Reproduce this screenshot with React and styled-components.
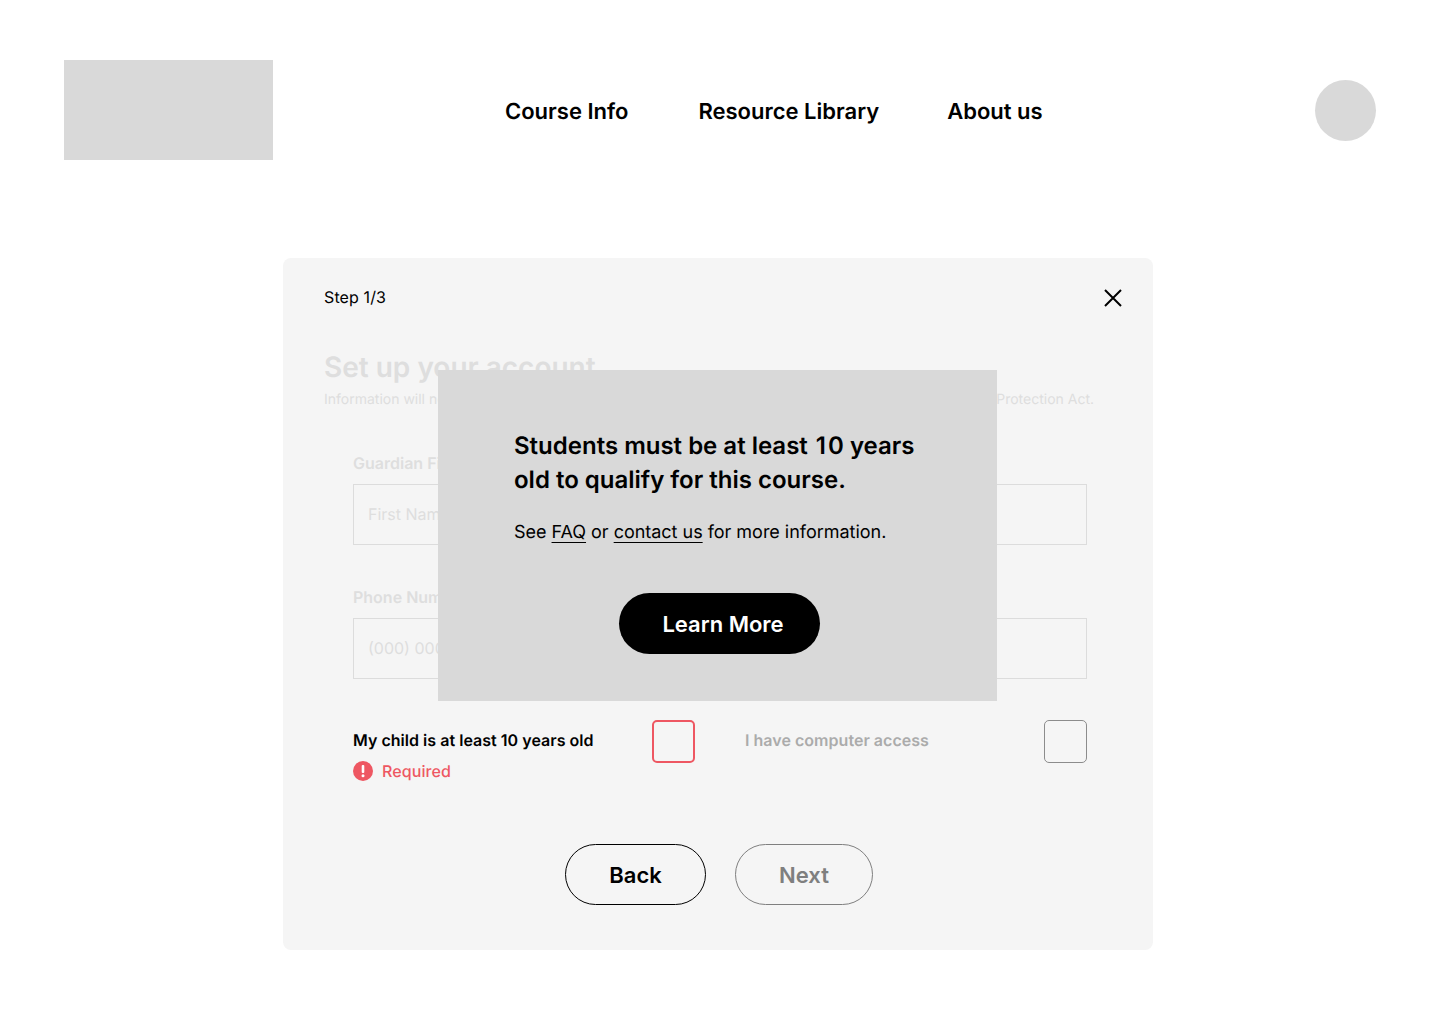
import React from 'react';
import styled, { createGlobalStyle } from 'styled-components';

const GlobalStyle = createGlobalStyle`
  html, body { margin: 0; padding: 0; background: #fff; }
  body {
    font-family: Inter, "Liberation Sans", sans-serif;
    color: #000;
    text-rendering: geometricPrecision;
  }
  * { box-sizing: border-box; }
`;

const Page = styled.div`
  width: 1440px;
  height: 1024px;
  overflow: hidden;
`;

const Header = styled.header`
  display: flex;
  align-items: flex-start;
  height: 198px;
  padding: 60px 64px 0;
`;

const Logo = styled.div`
  width: 209px;
  height: 100px;
  background: #d9d9d9;
`;

const Nav = styled.nav`
  display: flex;
  gap: 70px;
  margin-left: 232px;
  margin-top: 39px;
  font-size: 22px;
  line-height: 27px;
  font-weight: 600;
`;

const NavLink = styled.a`
  color: #000;

  &:last-child {
    margin-left: -2px;
  }
`;

const Avatar = styled.div`
  width: 61px;
  height: 61px;
  margin: 20px 0 0 auto;
  border-radius: 50%;
  background: #d9d9d9;
`;

const Card = styled.section`
  position: relative;
  width: 870px;
  height: 692px;
  margin: 60px 0 0 283px;
  padding: 29px 41px 0;
  background: #f5f5f5;
  border-radius: 8px;
`;

const TopRow = styled.div`
  display: flex;
  justify-content: space-between;
  align-items: flex-start;
`;

const Step = styled.span`
  font-size: 16px;
  line-height: 20px;
  letter-spacing: 0.12px;
`;

const Close = styled.svg`
  display: block;
  width: 18px;
  height: 18px;
  margin: 2px -10px 0 0;
`;

const Title = styled.h1`
  margin: 42px 0 0;
  font-size: 28px;
  line-height: 36px;
  font-weight: 600;
  color: #dedede;
`;

const Subtitle = styled.p`
  margin: 6px 0 0;
  font-size: 14px;
  line-height: 17px;
  color: #dedede;
  white-space: nowrap;
`;

const Form = styled.div`
  display: grid;
  grid-template-columns: 342px 342px;
  column-gap: 50px;
  row-gap: 42px;
  margin: 45px 0 0 29px;
`;

const Field = styled.div`
  display: flex;
  flex-direction: column;
`;

const Label = styled.label`
  font-size: 16px;
  line-height: 20px;
  font-weight: 600;
  color: #dedede;
  margin-bottom: 11px;
`;

const Input = styled.div`
  height: 61px;
  display: flex;
  align-items: center;
  padding: 0 14px 2px;
  border: 1px solid #dcdcdc;
  font-size: 16px;
  color: #dedede;
`;

const CheckRow = styled.div`
  display: flex;
  justify-content: space-between;
  align-items: flex-start;
  margin-top: -1px;
`;

const CheckText = styled.div`
  display: flex;
  flex-direction: column;
  gap: 11px;
  padding-top: 10px;
`;

const CheckLabel = styled.span`
  font-size: 16px;
  line-height: 20px;
  font-weight: 600;
  letter-spacing: 0.03px;
  color: ${({ $muted }) => ($muted ? '#ababab' : '#000')};
`;

const Checkbox = styled.div`
  width: 43px;
  height: 43px;
  border-radius: 5px;
  border-style: solid;
  border-color: ${({ $error }) => ($error ? '#ee5762' : '#8c8c8c')};
  border-width: ${({ $error }) => ($error ? '2px' : '1px')};
`;

const ErrorRow = styled.div`
  display: flex;
  align-items: center;
  gap: 9px;
  font-size: 16px;
  line-height: 20px;
  font-weight: 500;
  letter-spacing: 0.1px;
  color: #ee5762;
`;

const Actions = styled.div`
  display: flex;
  justify-content: center;
  gap: 29px;
  margin: 63px 0 0 2px;
`;

const Pill = styled.button`
  width: ${({ $width }) => $width}px;
  height: 61px;
  padding: 0;
  border-radius: 31px;
  background: transparent;
  border: 1px solid ${({ $disabled }) => ($disabled ? '#7f7f7f' : '#000')};
  color: ${({ $disabled }) => ($disabled ? '#7f7f7f' : '#000')};
  font-family: inherit;
  font-size: 22px;
  font-weight: 600;
`;

const Modal = styled.div`
  position: absolute;
  left: 155px;
  top: 112px;
  width: 559px;
  height: 331px;
  padding: 59px 76px 0;
  background: #d9d9d9;
`;

const ModalTitle = styled.h2`
  margin: 0;
  font-size: 24px;
  line-height: 34px;
  font-weight: 600;
`;

const One = styled.span`
  padding: 0 2px;
`;

const ModalText = styled.p`
  margin: 23px 0 0;
  font-size: 18px;
  line-height: 26px;
  letter-spacing: -0.02px;

  a {
    color: #000;
    text-decoration: underline;
    text-underline-offset: 4px;
    text-decoration-thickness: 1px;
  }
`;

const ModalAction = styled.div`
  display: flex;
  justify-content: center;
  margin-top: 47px;
  padding-left: 4px;
`;

const LearnMore = styled.button`
  width: 201px;
  height: 61px;
  padding: 0 0 0 7px;
  border: 0;
  border-radius: 31px;
  background: #000;
  color: #fff;
  font-family: inherit;
  font-size: 22px;
  font-weight: 600;
`;

const App = () => {
  return (
    <Page>
      <GlobalStyle />
      <Header>
        <Logo />
        <Nav>
          <NavLink>Course Info</NavLink>
          <NavLink>Resource Library</NavLink>
          <NavLink>About us</NavLink>
        </Nav>
        <Avatar />
      </Header>
      <Card>
        <TopRow>
          <Step>Step 1/3</Step>
          <Close viewBox="0 0 18 18" fill="none" stroke="#000" strokeWidth="2">
            <path d="M1 1l16 16M17 1L1 17" />
          </Close>
        </TopRow>
        <Title>Set up your account</Title>
        <Subtitle>Information will never be shared with any third parties, and will be stored in accordance with the Data Protection Act.</Subtitle>
        <Form>
          <Field>
            <Label>Guardian First Name</Label>
            <Input>First Name</Input>
          </Field>
          <Field>
            <Label>Guardian Last Name</Label>
            <Input>Last Name</Input>
          </Field>
          <Field>
            <Label>Phone Number</Label>
            <Input>(000) 000-0000</Input>
          </Field>
          <Field>
            <Label>Email Address</Label>
            <Input>name@email.com</Input>
          </Field>
          <CheckRow>
            <CheckText>
              <CheckLabel>My child is at least 10 years old</CheckLabel>
              <ErrorRow>
                <svg width="20" height="20" viewBox="0 0 20 20">
                  <circle cx="10" cy="10" r="10" fill="#ee5762" />
                  <rect x="8.7" y="4" width="2.6" height="8" rx="1" fill="#fff" />
                  <circle cx="10" cy="14.8" r="1.5" fill="#fff" />
                </svg>
                Required
              </ErrorRow>
            </CheckText>
            <Checkbox $error />
          </CheckRow>
          <CheckRow>
            <CheckText>
              <CheckLabel $muted>I have computer access</CheckLabel>
            </CheckText>
            <Checkbox />
          </CheckRow>
        </Form>
        <Actions>
          <Pill $width={141}>Back</Pill>
          <Pill $width={138} $disabled>Next</Pill>
        </Actions>
        <Modal>
          <ModalTitle>Students must be at least <One>1</One>0 years old to qualify for this course.</ModalTitle>
          <ModalText>See <a>FAQ</a> or <a>contact us</a> for more information.</ModalText>
          <ModalAction>
            <LearnMore>Learn More</LearnMore>
          </ModalAction>
        </Modal>
      </Card>
    </Page>
  );
};

export default App;
